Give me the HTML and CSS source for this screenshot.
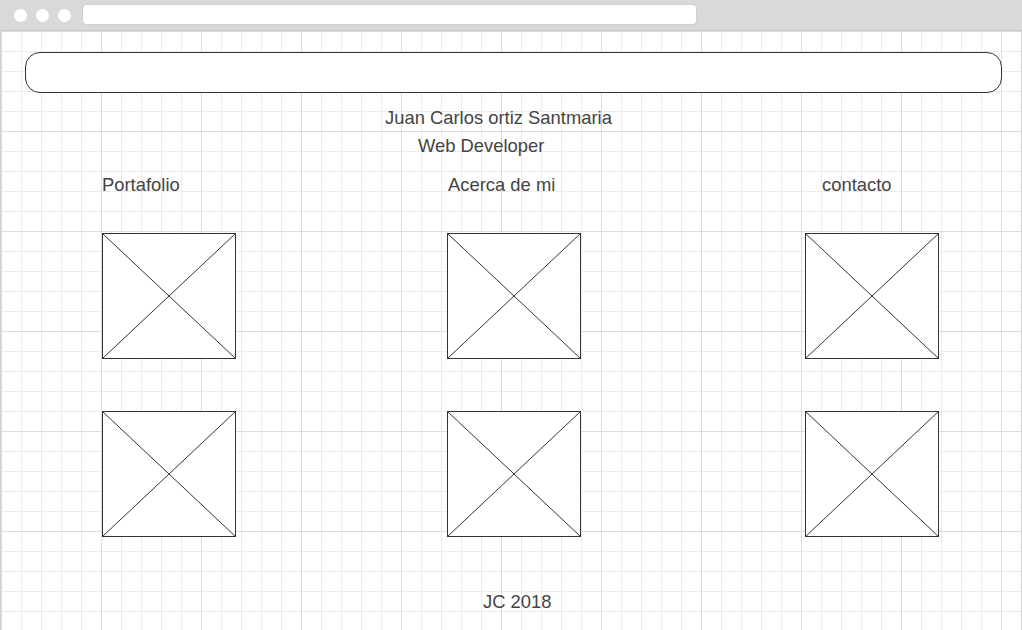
FILE: index.html
```html
<!DOCTYPE html>
<html lang="es">
<head>
    <meta charset="UTF-8">
    <meta name="viewport" content="width=device-width, initial-scale=1.0">
    <title>Juan Carlos ortiz Santmaria</title>
    <link rel="stylesheet" href="styles.css">
</head>
<body>
    <div class="window">
        <div class="chrome">
            <span class="dot"></span>
            <span class="dot"></span>
            <span class="dot"></span>
            <div class="url-bar"></div>
        </div>

        <div class="canvas">
            <div class="top-bar"></div>

            <h1 class="name">Juan Carlos ortiz Santmaria</h1>
            <p class="role">Web Developer</p>

            <div class="sections">
                <div class="section">
                    <h2 class="section-title">Portafolio</h2>
                    <svg class="placeholder" viewBox="0 0 134 126"><rect x="0.5" y="0.5" width="133" height="125"/><line x1="0.5" y1="0.5" x2="133.5" y2="125.5"/><line x1="133.5" y1="0.5" x2="0.5" y2="125.5"/></svg>
                    <svg class="placeholder" viewBox="0 0 134 126"><rect x="0.5" y="0.5" width="133" height="125"/><line x1="0.5" y1="0.5" x2="133.5" y2="125.5"/><line x1="133.5" y1="0.5" x2="0.5" y2="125.5"/></svg>
                </div>
                <div class="section">
                    <h2 class="section-title about">Acerca de mi</h2>
                    <svg class="placeholder" viewBox="0 0 134 126"><rect x="0.5" y="0.5" width="133" height="125"/><line x1="0.5" y1="0.5" x2="133.5" y2="125.5"/><line x1="133.5" y1="0.5" x2="0.5" y2="125.5"/></svg>
                    <svg class="placeholder" viewBox="0 0 134 126"><rect x="0.5" y="0.5" width="133" height="125"/><line x1="0.5" y1="0.5" x2="133.5" y2="125.5"/><line x1="133.5" y1="0.5" x2="0.5" y2="125.5"/></svg>
                </div>
                <div class="section">
                    <h2 class="section-title contact">contacto</h2>
                    <svg class="placeholder" viewBox="0 0 134 126"><rect x="0.5" y="0.5" width="133" height="125"/><line x1="0.5" y1="0.5" x2="133.5" y2="125.5"/><line x1="133.5" y1="0.5" x2="0.5" y2="125.5"/></svg>
                    <svg class="placeholder" viewBox="0 0 134 126"><rect x="0.5" y="0.5" width="133" height="125"/><line x1="0.5" y1="0.5" x2="133.5" y2="125.5"/><line x1="133.5" y1="0.5" x2="0.5" y2="125.5"/></svg>
                </div>
            </div>

            <footer class="footer">JC 2018</footer>
        </div>
    </div>
</body>
</html>
```

FILE: styles.css
```css
:root {
    --chrome-bg: #d9d9d9;
    --ink: #333333;
    --text: #444444;
    --grid-minor: #ececec;
    --grid-major: #dcdcdc;
}

body {
    margin: 0;
    padding: 0;
    background: #ffffff;
    font-family: 'Liberation Sans', Arial, sans-serif;
    color: var(--text);
}

.window {
    width: 1022px;
    height: 630px;
    overflow: hidden;
    display: flex;
    flex-direction: column;
}

.chrome {
    height: 31px;
    box-sizing: border-box;
    background: var(--chrome-bg);
    border-bottom: 1px solid #c8c8c8;
    display: flex;
    align-items: center;
    padding-left: 14px;
    gap: 9px;
}

.dot {
    width: 13px;
    height: 13px;
    border-radius: 50%;
    background: #ffffff;
}

.url-bar {
    width: 613px;
    height: 19px;
    margin-left: 3px;
    margin-top: -1px;
    background: #ffffff;
    border-radius: 4px;
    box-shadow: 0 0 0 1px #cfcfcf;
}

.canvas {
    flex: 1;
    box-sizing: border-box;
    padding: 21px 19px 0 24px;
    border-left: 1px solid #d0d0d0;
    border-right: 1px solid #d0d0d0;
    background-color: #ffffff;
    background-image:
        linear-gradient(to right, var(--grid-major) 1px, transparent 1px),
        linear-gradient(to bottom, var(--grid-major) 1px, transparent 1px),
        linear-gradient(to right, var(--grid-minor) 1px, transparent 1px),
        linear-gradient(to bottom, var(--grid-minor) 1px, transparent 1px);
    background-size: 100px 100px, 100px 100px, 20px 20px, 20px 20px;
    background-position: 0 0;
}

.top-bar {
    height: 41px;
    box-sizing: border-box;
    border: 1px solid var(--ink);
    border-radius: 15px;
    background: #ffffff;
}

.name,
.role,
.section-title,
.footer {
    font-size: 18.4px;
    font-weight: normal;
    line-height: 20px;
    margin: 0;
}

.name {
    margin-top: 15px;
    padding-left: 360px;
}

.role {
    margin-top: 8px;
    padding-left: 393px;
}

.sections {
    display: grid;
    grid-template-columns: 345px 358px 134px;
    padding-left: 77px;
    margin-top: 19px;
}

.section {
    display: flex;
    flex-direction: column;
    align-items: flex-start;
}

.section-title.about {
    padding-left: 1px;
}

.section-title.contact {
    padding-left: 17px;
}

.placeholder {
    display: block;
    width: 134px;
    height: 126px;
    margin-top: 38px;
}

.placeholder + .placeholder {
    margin-top: 52px;
}

.placeholder rect {
    fill: #ffffff;
    stroke: var(--ink);
    stroke-width: 1;
}

.placeholder line {
    stroke: var(--ink);
    stroke-width: 1;
}

.footer {
    margin-top: 55px;
    padding-left: 458px;
}
```
